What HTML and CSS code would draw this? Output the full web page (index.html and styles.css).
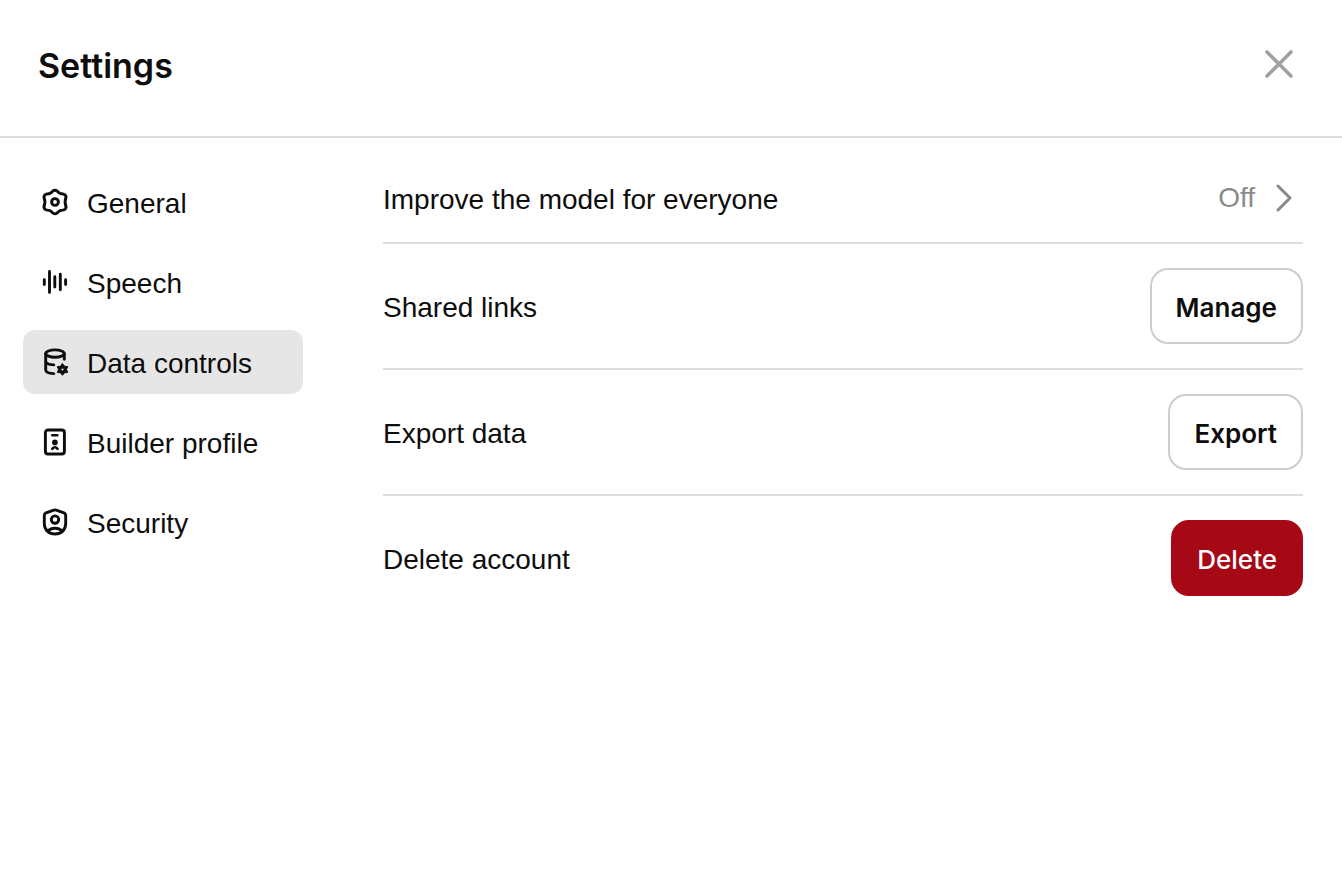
FILE: index.html
```html
<!DOCTYPE html>
<html lang="en">
<head>
<meta charset="utf-8">
<meta name="viewport" content="width=device-width, initial-scale=1">
<title>Settings</title>
<link rel="stylesheet" href="styles.css">
</head>
<body>
<header class="header">
  <h1 class="title">Settings</h1>
  <button class="close" type="button" aria-label="Close">
    <svg width="32" height="32" viewBox="0 0 32 32" fill="none" stroke="currentColor" stroke-width="3.6" stroke-linecap="round"><path d="M4 4l24 24M28 4L4 28"/></svg>
  </button>
</header>
<div class="layout">
  <nav class="nav" aria-label="Settings sections">
    <button class="tab" type="button">
      <svg class="icon" viewBox="0 0 32 32"><path d="M13.700 5.100Q16 3.400 18.300 5.100C19.700 7 21.300 7.900 23.700 7.900Q26.800 8.300 27.100 11.200C25.800 14.200 25.800 17.800 27.100 20.800Q26.800 23.700 23.700 24.100C21.300 24.100 19.700 25 18.300 26.900Q16 28.600 13.700 26.900C12.300 25 10.700 24.100 8.300 24.100Q5.200 23.700 4.900 20.800C6.200 17.800 6.200 14.200 4.900 11.200Q5.200 8.300 8.300 7.900C10.700 7.900 12.300 7 13.700 5.100Z"/><circle cx="16" cy="16" r="3.400"/></svg>
      <span class="label">General</span>
    </button>
    <button class="tab" type="button">
      <svg class="icon" viewBox="0 0 32 32"><path d="M5.300 13.700v4.900M10.500 5.400v21M15.800 10.700v10.300M21.300 8.100v15.600M26.600 13.700v4.900"/></svg>
      <span class="label">Speech</span>
    </button>
    <button class="tab tab-active" type="button" aria-current="page">
      <svg class="icon" viewBox="0 0 32 32"><ellipse cx="16" cy="7.600" rx="9.300" ry="3.700"/><path d="M6.700 8v15.700c0 2.200 3.500 3.700 8.100 3.900M6.700 15c0 2.200 3.500 3.700 8.100 3.900M25.300 8v5.200"/><path class="solid" d="M23.500 17.700l2 2.500 3.200.4-1.200 2.900 1.200 2.900-3.200.4-2 2.500-2-2.500-3.200-.4 1.200-2.900-1.200-2.900 3.200-.4Z"/><circle class="hole" cx="23.500" cy="23.500" r="1.100"/></svg>
      <span class="label">Data controls</span>
    </button>
    <button class="tab" type="button">
      <svg class="icon" viewBox="0 0 32 32"><rect x="6.400" y="4" width="19" height="24" rx="2.600"/><path class="bar" d="M13.300 9.300h5"/><circle class="dot" cx="15.900" cy="16.400" r="2.800"/><path class="bar" d="M13.200 22.900Q15.900 19.700 18.600 22.900"/></svg>
      <span class="label">Builder profile</span>
    </button>
    <button class="tab" type="button">
      <svg class="icon" viewBox="0 0 32 32"><path d="M14.800 4.100Q16 3.600 17.200 4.100L25 6.900Q26.700 7.600 26.700 9.400V17.600C26.700 24.400 21.800 28 16 28S5.300 24.400 5.300 17.600V9.400Q5.300 7.600 7 6.900Z"/><circle cx="16" cy="13.600" r="3.700"/><path d="M9.400 24.900C12.200 21.300 19.800 21.300 22.600 24.900"/></svg>
      <span class="label">Security</span>
    </button>
  </nav>
  <main class="panel">
    <div class="row">
      <span class="label">Improve the model for everyone</span>
      <button class="state" type="button" aria-label="Improve the model for everyone: Off">
        Off
        <svg width="40" height="40" viewBox="0 0 40 40" fill="none" stroke="currentColor" stroke-width="3" stroke-linecap="round" stroke-linejoin="round"><path d="M15 8L27 20L15 32"/></svg>
      </button>
    </div>
    <div class="row">
      <span class="label">Shared links</span>
      <button class="btn" type="button">Manage</button>
    </div>
    <div class="row">
      <span class="label">Export data</span>
      <button class="btn" type="button">Export</button>
    </div>
    <div class="row">
      <span class="label">Delete account</span>
      <button class="btn btn-danger" type="button">Delete</button>
    </div>
  </main>
</div>
</body>
</html>
```

FILE: styles.css
```css
* {
  box-sizing: border-box;
}

body {
  margin: 0;
  background: #fff;
  color: #0d0d0d;
  font-family: "Liberation Sans", Arial, sans-serif;
  font-size: 28px;
  line-height: 40px;
}

button {
  font: inherit;
  color: inherit;
  background: none;
  border: 0;
  padding: 0;
  cursor: pointer;
}

svg {
  display: block;
  flex: none;
}

.header {
  display: flex;
  align-items: center;
  justify-content: space-between;
  padding: 40px 47px 48px 38px;
  border-bottom: 2px solid #dedede;
}

.title {
  margin: 0;
  padding-top: 4px;
  font-family: Inter, sans-serif;
  font-size: 34px;
  font-weight: 600;
  line-height: 44px;
}

.close {
  color: #a0a0a0;
}

.layout {
  display: flex;
  gap: 80px;
  padding: 16px 39px 24px 23px;
}

.nav {
  display: flex;
  flex-direction: column;
  flex: none;
  gap: 16px;
  width: 280px;
  padding-top: 16px;
}

.tab {
  display: flex;
  align-items: center;
  gap: 16px;
  padding: 12px 16px;
  border-radius: 12px;
  text-align: left;
}

.tab-active {
  background: #e6e6e6;
}

.label {
  padding-top: 4px;
  line-height: 36px;
}

.icon {
  width: 32px;
  height: 32px;
  fill: none;
  stroke: currentColor;
  stroke-width: 2.9;
  stroke-linecap: round;
  stroke-linejoin: round;
}

.solid {
  fill: currentColor;
  stroke-width: 1;
}

.hole {
  fill: #e6e6e6;
  stroke: none;
}

.bar {
  stroke-width: 2.5;
}

.dot {
  fill: currentColor;
  stroke: none;
}

.panel {
  flex: 1;
  min-width: 0;
}

.row {
  display: flex;
  align-items: center;
  justify-content: space-between;
  gap: 16px;
  padding: 24px 0;
  border-bottom: 2px solid #dedede;
}

.row:last-child {
  border-bottom: 0;
}

.state {
  display: flex;
  align-items: center;
  gap: 8px;
  color: #8a8a8a;
}

.btn {
  padding: 18px 24px 14px;
  border: 2px solid #cdcdcd;
  border-radius: 18px;
  font-family: Inter, sans-serif;
  font-size: 26px;
  font-weight: 600;
}

.btn-danger {
  border-color: #a70816;
  background: #a70816;
  color: #fff;
  font-weight: 500;
}
```
